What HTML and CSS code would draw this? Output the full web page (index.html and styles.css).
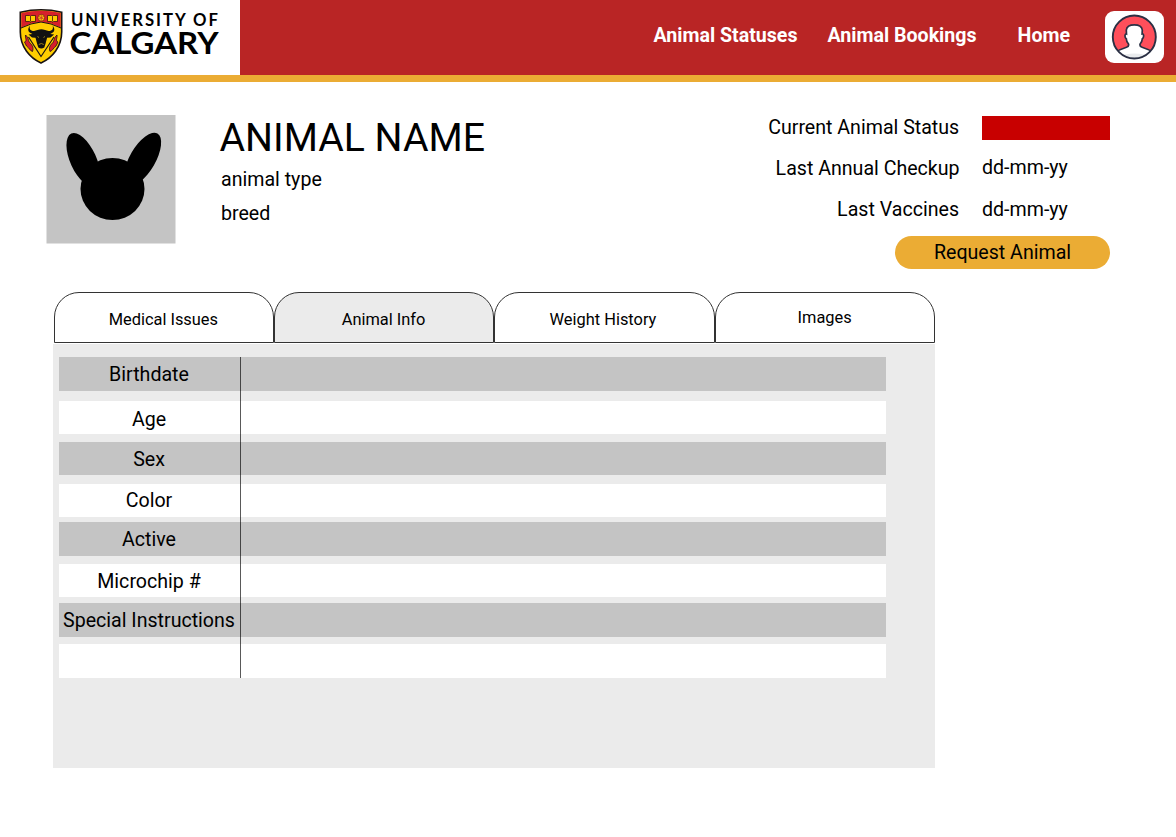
FILE: index.html
```html
<!DOCTYPE html>
<html lang="en">
<head>
<meta charset="utf-8">
<title>Animal Info</title>
<link rel="stylesheet" href="styles.css">
</head>
<body>
<header class="header">
  <svg class="brand" viewBox="0 0 240 75" role="img" aria-label="University of Calgary">
    <path d="M20.3 12.2Q41 7.4 61.7 12.2V32C61.7 47 52 58 41 63 30 58 20.3 47 20.3 32Z" fill="#ffcd00" stroke="#191313" stroke-width="1.6"/>
    <path d="M21.3 13Q41 8.6 60.7 13V27.5L51 23.500 41 22 31 23.500 21.3 27.500Z" fill="#d71f2b"/>
    <path d="M21 28 31 24 41 22 51 24 61 28" fill="none" stroke="#191313" stroke-width="1"/>
    <path d="M25.5 15.500h4l1 .8 1-.8h4v6h-4l-1 .8-1-.8h-4zM47.500 15.500h4l1 .8 1-.8h4v6h-4l-1 .8-1-.8h-4z" fill="#ffcd00" stroke="#3a1010" stroke-width=".8"/>
    <path d="M30.5 16.500v5M52.500 16.500v5" stroke="#3a1010" stroke-width=".8"/>
    <circle cx="41.3" cy="17.800" r="3.4" fill="#ffcd00" stroke="#6b1714" stroke-width=".7"/>
    <path d="M41.3 14.600v6.4M38.500 16.200l5.600 3.200M38.500 19.400l5.600-3.200" stroke="#c8352a" stroke-width=".8"/>
    <path d="M28.500 37 41 56.500 54 37" fill="none" stroke="#191313" stroke-width="1.2"/>
    <path d="M25.500 35c3.500 3 2.500 6 4.500 8s4 4 2.500 8.500c-3-1-3-3.500-6-5.500l-2-4c3-1 .5-4 1-7zM57 35c-3.500 3-2.500 6-4.500 8s-4 4-2.500 8.500c3-1 3-3.500 6-5.500l2-4c-3-1-.5-4-1-7z" fill="#d71f2b" stroke="#191313" stroke-width=".8"/>
    <path d="M30 25.500c-1 3 0 5.500 4 5.500l3.500-1q3.800-1.500 7.600 0l3.500 1c4 0 5-2.500 4-5.500 3 4 2 7-2.500 8.500l4 .5-3.500 3-3.500.2-1.500 5.800-1.300 4q-3 2-6 0l-1.300-4-1.500-5.800-3.500-.2-3.500-3 4-.5c-4.500-1.500-5.500-4.500-2.500-8.500z" fill="#111"/>
    <path d="M37.500 36.500l1.500 1M45 36.500l-1.500 1M38.800 44.500q2.500-2 5 0" fill="none" stroke="#bb9b20" stroke-width=".8"/>
    <text class="brand-small" x="71" y="26.300" textLength="147">UNIVERSITY OF</text>
    <text class="brand-large" x="69.500" y="53.800" textLength="149" lengthAdjust="spacingAndGlyphs">CALGARY</text>
  </svg>
  <nav class="nav">
    <a class="nav-link">Animal Statuses</a>
    <a class="nav-link nav-bookings">Animal Bookings</a>
    <a class="nav-link nav-home">Home</a>
    <a class="avatar" aria-label="Profile">
      <svg viewBox="0 0 59 52" width="59" height="52">
        <defs><clipPath id="disc"><circle cx="29.300" cy="26" r="21.500"/></clipPath></defs>
        <circle cx="29.300" cy="26" r="21.500" fill="#ff4f5b"/>
        <path clip-path="url(#disc)" d="M9 42.500Q14 38.500 21.500 36.300Q24.200 35.500 23.500 33Q21.300 30.500 21.400 28Q19.800 27 20 24.500Q20.500 22.700 21.500 23L21.300 19Q22 13.800 29.300 13.800T37.300 19L37.100 23Q38.300 22.700 38.600 24.500Q38.800 27 37.200 28Q37.300 30.500 35.100 33Q34.400 35.500 37.100 36.300Q44.600 38.500 49.600 42.500V50H9Z" fill="#fff" stroke="#2b3044" stroke-width="1.700"/>
        <path clip-path="url(#disc)" d="M12 46Q20 42.500 29.300 42.500T47 46L29 50Z" fill="#e9ebed"/>
        <circle cx="29.300" cy="26" r="21.500" fill="none" stroke="#2b3044" stroke-width="1.900"/>
      </svg>
    </a>
  </nav>
</header>
<main class="page">
  <section class="summary">
    <svg class="portrait" viewBox="0 0 130 129">
      <path fill="#c4c4c4" d="M.5 0h129v128.500H.5z"/>
      <ellipse cx="66.500" cy="74" rx="32" ry="31"/>
      <ellipse cx="37.300" cy="45" rx="13" ry="29" transform="rotate(-24.500 37.300 45)"/>
      <ellipse cx="96.700" cy="44" rx="12.800" ry="29.500" transform="rotate(30 96.700 44)"/>
    </svg>
    <div class="identity">
      <h1 class="name">ANIMAL NAME</h1>
      <p class="detail">animal type</p>
      <p class="detail">breed</p>
    </div>
    <div class="status">
      <dl class="facts">
        <dt class="status-label">Current Animal Status</dt><dd><span class="status-color"></span></dd>
        <dt>Last Annual Checkup</dt><dd class="checkup">dd-mm-yy</dd>
        <dt class="vaccines">Last Vaccines</dt><dd>dd-mm-yy</dd>
      </dl>
      <button class="request">Request Animal</button>
    </div>
  </section>
  <section class="record">
    <div class="tabs">
      <div class="tab">Medical Issues</div>
      <div class="tab active">Animal Info</div>
      <div class="tab weight">Weight History</div>
      <div class="tab images">Images</div>
    </div>
    <div class="panel">
      <div class="rows">
        <div class="row"><span class="label">Birthdate</span></div>
        <div class="row age"><span class="label">Age</span></div>
        <div class="row sex"><span class="label">Sex</span></div>
        <div class="row color"><span class="label">Color</span></div>
        <div class="row active-row"><span class="label">Active</span></div>
        <div class="row"><span class="label">Microchip #</span></div>
        <div class="row special"><span class="label">Special Instructions</span></div>
        <div class="row last"><span class="label"></span></div>
        <div class="divider"></div>
      </div>
    </div>
  </section>
</main>
</body>
</html>
```
FILE: styles.css
```css
* { box-sizing: border-box; }
body {
  margin: 0;
  background: #fff;
  color: #000;
  font: 19.6px/24px Roboto, sans-serif;
}
h1, p, dl, dd { margin: 0; }
.header {
  display: flex;
  height: 82px;
  background: #b92525;
  border-bottom: 7px solid #ebac34;
}
.brand { flex: none; width: 240px; height: 75px; background: #fff; }
.brand-small { font: 700 16.7px Lato, sans-serif; }
.brand-large { font: 700 31px Lato, sans-serif; }
.nav {
  flex: 1;
  display: flex;
  justify-content: flex-end;
  align-items: flex-start;
  padding: 11px 12px 0 0;
}
.nav-link { margin: 13px 30px 0 0; color: #fff; font-weight: 700; white-space: nowrap; }
.nav-bookings { margin-right: 31px; }
.nav-home { margin: 13px 35px 0 10px; }
.avatar { width: 59px; height: 52px; background: #fff; border-radius: 9px; }
.avatar svg { display: block; }
.page { padding: 33px 66px 0 46px; }
.summary { display: flex; height: 177px; }
.portrait { flex: none; width: 130px; height: 129px; }
.identity { flex: 1; padding-left: 43.5px; }
.name { font-size: 39.2px; line-height: 46px; font-weight: 400; margin-bottom: 7px; }
.detail { padding-left: 1.5px; margin-bottom: 10px; }
.status { display: flex; flex-direction: column; align-items: flex-end; }
.facts {
  display: grid;
  grid-template-columns: auto 128px;
  column-gap: 22px;
  row-gap: 17px;
  text-align: right;
}
.facts dt { padding-right: 0.4px; }
.facts .status-label { height: 24px; padding: 1px 0.8px 0 0; }
.facts .vaccines { padding-right: 1px; }
.facts dd { text-align: left; }
.facts .checkup { margin-top: -1px; }
.status-color { display: block; height: 24px; margin-top: 1px; background: #c80000; }
.request {
  width: 215px;
  height: 33px;
  margin-top: 14px;
  padding: 0;
  border: 0;
  border-radius: 17px;
  background: #ebac34;
  color: #000;
  font: inherit;
}
.record { width: 882px; margin-left: 7px; }
.tabs { display: grid; grid-template-columns: repeat(4, 220.2px); padding-left: 1px; }
.tab {
  height: 51px;
  border: 1px solid #333;
  border-radius: 25px 25px 0 0;
  padding: 15px 1.500px 0 0;
  text-align: center;
  font-size: 16.4px;
}
.tab.active { background: #ebebeb; }
.tab.weight { padding-right: 3px; }
.tab.images { padding: 13px 0 0; }
.panel { height: 424px; margin-top: 1px; padding: 13px 48px 0 6px; background: #ebebeb; }
.rows { display: grid; grid-template-columns: 827px; position: relative; }
.row { height: 33px; margin-bottom: 8px; background: #fff; line-height: 35px; }
.row:nth-child(odd) { height: 34px; background: #c4c4c4; }
.row:first-child { margin-bottom: 10px; }
.row.sex { height: 33px; margin-bottom: 9px; }
.row.color { margin-bottom: 5px; line-height: 33px; }
.row.age { line-height: 37px; }
.active-row + .row { margin-bottom: 6px; }
.row.special { margin-bottom: 7px; }
.row.last { height: 34px; margin: 0; }
.label { display: block; width: 180px; text-align: center; white-space: nowrap; }
.divider { position: absolute; left: 181px; top: 0; bottom: 0; width: 1px; background: rgba(0, 0, 0, .65); }
```
